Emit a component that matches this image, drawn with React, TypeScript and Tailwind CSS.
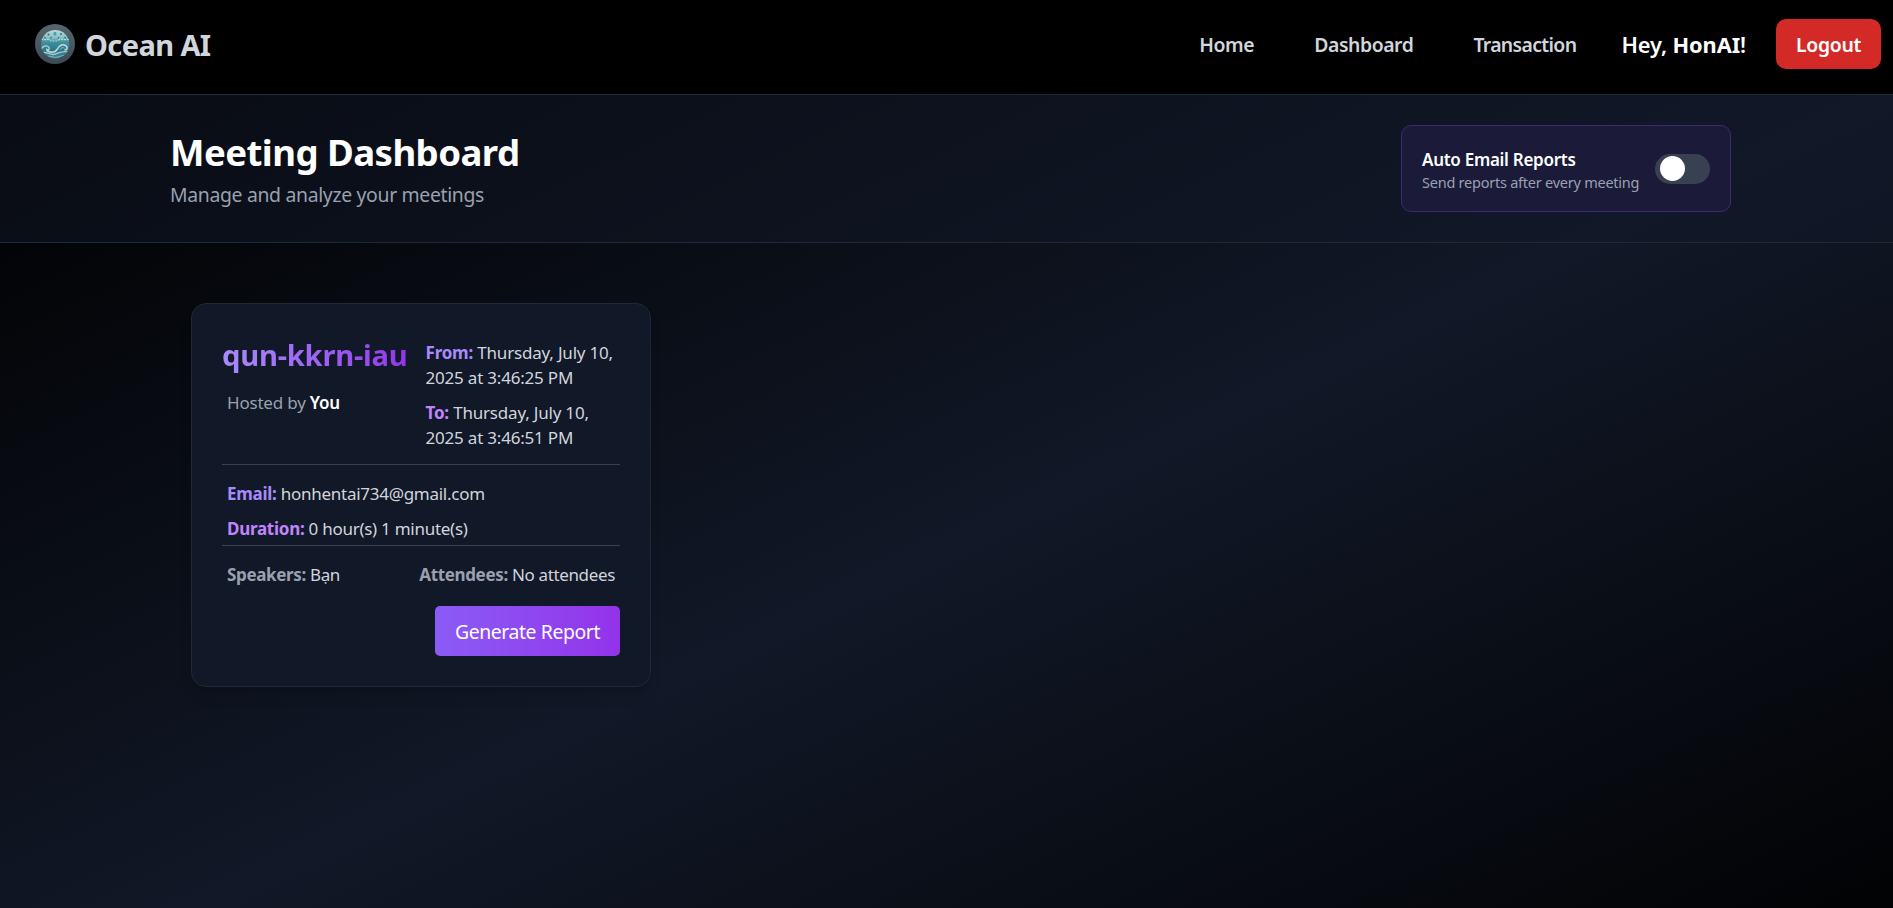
import { useState, type ReactNode } from "react";

function Logo() {
  return (
    <svg viewBox="0 0 40 40" className="h-10 w-10 shrink-0">
      <defs>
        <linearGradient id="rim" x1="0" y1="0" x2="0" y2="1">
          <stop offset="0" stopColor="#58656e" />
          <stop offset="1" stopColor="#3c4a54" />
        </linearGradient>
        <linearGradient id="sea" x1="0" y1="0" x2="0" y2="1">
          <stop offset="0" stopColor="#c3dcd9" />
          <stop offset="0.28" stopColor="#8cc0c4" />
          <stop offset="0.42" stopColor="#3d909f" />
          <stop offset="0.7" stopColor="#2b7688" />
          <stop offset="1" stopColor="#438c99" />
        </linearGradient>
        <clipPath id="disc">
          <circle cx="20.2" cy="20.2" r="14.2" />
        </clipPath>
      </defs>
      <circle cx="20" cy="20" r="20" fill="url(#rim)" />
      <g clipPath="url(#disc)">
        <rect x="5" y="5" width="31" height="31" fill="url(#sea)" />
        <g fill="#2b7183">
          <circle cx="13.5" cy="10.5" r="1" />
          <circle cx="26" cy="10" r="1" />
          <circle cx="10" cy="13.6" r="0.8" />
          <circle cx="16" cy="13.6" r="0.8" />
          <circle cx="23.5" cy="13.8" r="0.8" />
          <circle cx="30" cy="13.6" r="0.9" />
          <rect x="18.6" y="8" width="2.8" height="3.4" rx="1" fill="#3fa3ae" />
        </g>
        <path d="M6 15.500h8l2 1.500h6l2-1.500h10" fill="none" stroke="#cfe4df" strokeWidth="0.8" strokeDasharray="2 1" />
        <path d="M6 26c1-4 6-5.500 8-2.500 1 2-1.500 3-2.500 1.500" fill="none" stroke="#b9d3d0" strokeWidth="1.300" strokeLinecap="round" />
        <path d="M12 26.500c4 2.500 8 2 10.500-1.500 2-3.500 5-5 8-3.500 2.500 1.500 2 4.500-.5 4.500" fill="none" stroke="#c6dcd8" strokeWidth="1.500" strokeLinecap="round" />
        <path d="M7 29c4-2 7 1.500 11 1.500s7-4.500 16-2.500" fill="none" stroke="#a9c9c9" strokeWidth="1.300" />
        <path d="M11 32.500c4-1 6 .8 9.500.8s6-2 9.500-2" fill="none" stroke="#7fb3ba" strokeWidth="1" />
        <path d="M25 25.500c1-2 3.500-2.500 4.500-1" fill="none" stroke="#8cc3c8" strokeWidth="0.9" />
      </g>
    </svg>
  );
}

function NavLink({ children, className }: { children: ReactNode; className: string }) {
  return (
    <a href="#" className={`pt-[2px] text-[19.4px] leading-[30px] font-semibold text-gray-300 ${className}`}>
      {children}
    </a>
  );
}

function Field({ label, color, children }: { label: string; color: string; children: ReactNode }) {
  return (
    <p>
      <span className={`font-bold ${color}`}>{label}</span> {children}
    </p>
  );
}

function Toggle() {
  const [on, setOn] = useState(false);
  return (
    <button
      type="button"
      role="switch"
      aria-checked={on}
      onClick={() => setOn(!on)}
      className={`flex h-[30px] w-[55px] items-center rounded-full px-[5px] ${on ? "justify-end bg-purple-600" : "justify-start bg-[#374151]"}`}
    >
      <span className="mb-px h-[25px] w-[25px] rounded-full bg-white" />
    </button>
  );
}

function MeetingCard() {
  return (
    <article className="flex h-[384px] w-[460px] flex-col rounded-[15px] border border-[#1f2937] bg-[#111827] px-[30px] pt-[30px] text-[17px] leading-[25px] tracking-[-0.2px] text-gray-300 shadow-lg">
      <div className="flex justify-between border-b border-[#374151] pb-[14px]">
        <div className="w-[203px] whitespace-nowrap">
          <h2 className="mt-px w-fit bg-gradient-to-r from-[#a78bfa] to-[#9333ea] bg-clip-text text-[29.2px] leading-[40px] font-bold tracking-[-0.25px] text-transparent">
            qun-kkrn-iau
          </h2>
          <p className="mt-[15px] pl-[5px] text-gray-400">
            Hosted by <span className="font-semibold text-white">You</span>
          </p>
        </div>
        <div className="mt-[6px] flex w-[194.5px] flex-col gap-[10px]">
          <Field label="From:" color="text-[#a78bfa]">
            Thursday, July 10,
            <br />
            2025 at 3:46:25 PM
          </Field>
          <Field label="To:" color="text-[#c084fc]">
            Thursday, July 10,
            <br />
            2025 at 3:46:51 PM
          </Field>
        </div>
      </div>
      <div className="flex flex-col gap-[10px] border-b border-[#374151] px-[5px] pt-4 pb-1 tracking-[-0.27px]">
        <Field label="Email:" color="text-[#a78bfa]">
          honhentai734@gmail.com
        </Field>
        <Field label="Duration:" color="text-[#c084fc]">
          0 hour(s) 1 minute(s)
        </Field>
      </div>
      <div className="flex justify-between px-[5px] pt-4 tracking-[-0.35px]">
        <Field label="Speakers:" color="text-gray-400">
          Bạn
        </Field>
        <Field label="Attendees:" color="text-gray-400">
          No attendees
        </Field>
      </div>
      <button
        type="button"
        className="mt-[19px] h-[50px] w-[185px] self-end rounded-[5px] bg-[linear-gradient(to_right,#8b5cf6,#9333ea)] text-[19.4px] tracking-[-0.4px] text-white"
      >
        Generate Report
      </button>
    </article>
  );
}

export default function App() {
  return (
    <div className="flex h-[908px] flex-col overflow-hidden bg-black font-['Noto_Sans','Open_Sans',sans-serif] text-white">
      <nav className="flex h-[94px] shrink-0 items-start justify-between bg-black pr-3 pl-[35px]">
        <div className="flex items-start gap-[10px] pt-6">
          <Logo />
          <span className="mt-px text-[29px] leading-[40px] font-bold tracking-[-0.6px] text-gray-300">Ocean AI</span>
        </div>
        <div className="flex items-center pt-[19px]">
          <NavLink className="mr-[60px] tracking-[-0.35px]">Home</NavLink>
          <NavLink className="mr-[60px] tracking-[-0.45px]">Dashboard</NavLink>
          <NavLink className="mr-[45px] tracking-[-0.65px]">Transaction</NavLink>
          <span className="mr-[30px] pt-[2px] text-[21.8px] leading-[30px] font-semibold tracking-[-0.1px]">
            Hey, <span className="font-bold">HonAI</span>!
          </span>
          <button type="button" className="h-[50px] w-[105px] rounded-[10px] bg-[#d32a28] pt-[2px] text-[19.4px] font-semibold tracking-[-0.3px]">
            Logout
          </button>
        </div>
      </nav>
      <main className="h-[908px] shrink-0 bg-[linear-gradient(to_bottom_right,#000,#111827,#000)]">
        <header className="flex h-[149px] items-center justify-between border-y border-[#1f2937] bg-[#111827]/50 pr-[162px] pl-[170px]">
          <div className="mt-[3px]">
            <h1 className="text-[36.6px] leading-[45px] font-bold tracking-[-0.55px]">Meeting Dashboard</h1>
            <p className="mt-[5px] text-[19.4px] leading-[30px] tracking-[-0.33px] text-gray-400">Manage and analyze your meetings</p>
          </div>
          <div className="flex h-[87px] w-[330px] items-center justify-between rounded-[10px] border border-[#3b2a70] bg-[#1b1a39] px-5">
            <div className="pt-[4px]">
              <p className="text-[17px] leading-[22px] font-semibold tracking-[-0.28px]">Auto Email Reports</p>
              <p className="text-[14.5px] leading-[22px] tracking-[-0.24px] text-gray-400">Send reports after every meeting</p>
            </div>
            <Toggle />
          </div>
        </header>
        <section className="px-[191px] pt-[60px]">
          <MeetingCard />
        </section>
      </main>
    </div>
  );
}
